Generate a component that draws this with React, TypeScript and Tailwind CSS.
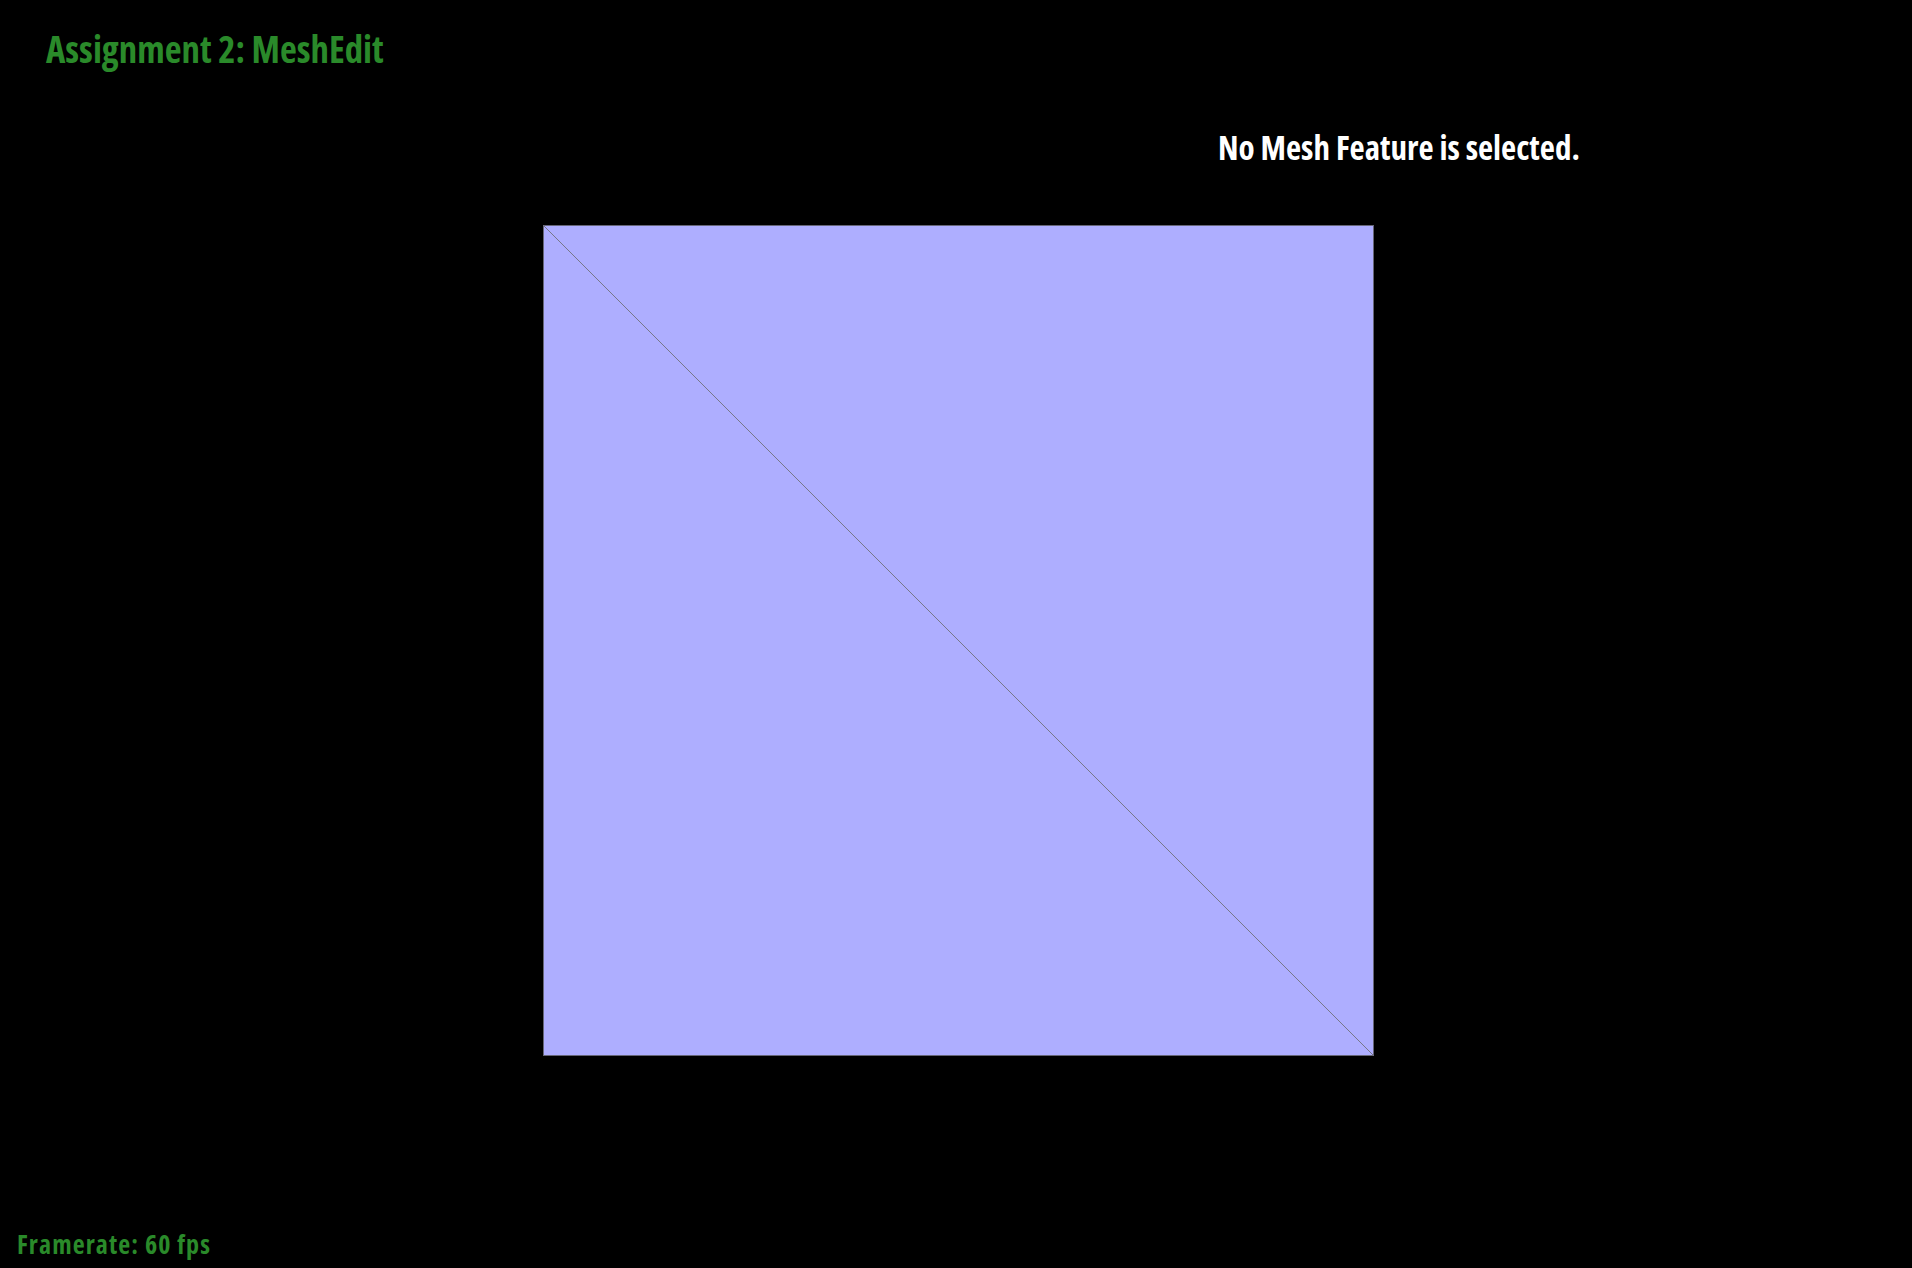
export default function App() {
  return (
    <div className="w-[1912px] h-[1268px] bg-black relative overflow-hidden" style={{ fontFamily: '"Open Sans", sans-serif' }}>
      <div className="absolute left-[46px] top-[31px] text-[36.8px] font-bold text-[#2a8a2a] font-stretch-condensed leading-none whitespace-nowrap">
        Assignment 2: MeshEdit
      </div>
      <div className="absolute left-[1218px] top-[131px] text-[33px] font-bold text-white font-stretch-condensed leading-none whitespace-nowrap">
        No Mesh Feature is selected.
      </div>
      <div className="absolute left-[17px] top-[1231px] text-[26px] font-bold text-[#2a8a2a] font-stretch-condensed tracking-[1.1px] leading-none whitespace-nowrap">
        Framerate: 60 fps
      </div>
      <svg className="absolute left-[543px] top-[225px]" width="831" height="831" viewBox="0 0 831 831">
        <rect x="0.5" y="0.5" width="830" height="830" fill="#aeaeff" stroke="#666677" strokeWidth="1" />
        <line x1="0.5" y1="0.5" x2="830.5" y2="830.5" stroke="#777788" strokeWidth="1" />
      </svg>
    </div>
  );
}
